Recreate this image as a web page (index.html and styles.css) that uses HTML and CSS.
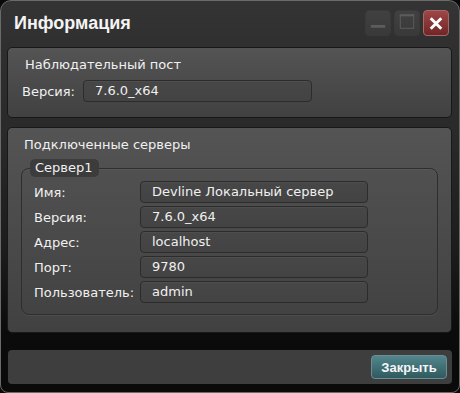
FILE: index.html
```html
<!DOCTYPE html>
<html lang="ru">
<head>
<meta charset="utf-8">
<title>Информация</title>
<link rel="stylesheet" href="styles.css">
</head>
<body>
<div class="window">
  <header class="titlebar">
    <h1 class="title">Информация</h1>
    <div class="controls">
      <button class="ctl ctl-min" aria-label="Свернуть">
        <svg width="25" height="25" viewBox="0 0 25 25"><rect x="5" y="14" width="15" height="3" fill="#5c5c5c"/></svg>
      </button>
      <button class="ctl ctl-max" aria-label="Развернуть">
        <svg width="25" height="25" viewBox="0 0 25 25"><rect x="5.5" y="3.5" width="14" height="14" fill="none" stroke="#5c5c5c" stroke-width="1"/><rect x="5" y="3" width="15" height="2" fill="#5c5c5c"/></svg>
      </button>
      <button class="ctl ctl-close" aria-label="Закрыть">
        <svg width="25" height="25" viewBox="0 0 25 25"><path d="M7 7 L18 18 M18 7 L7 18" stroke="#fff" stroke-width="3" stroke-linecap="butt"/></svg>
      </button>
    </div>
  </header>

  <div class="content">
    <section class="panel panel-post">
      <div class="panel-title">Наблюдательный пост</div>
      <div class="row row-post">
        <span class="label">Версия:</span>
        <div class="field field-post">7.6.0_x64</div>
      </div>
    </section>

    <section class="panel panel-servers">
      <div class="panel-title">Подключенные серверы</div>
      <fieldset class="group">
        <legend class="legend">Сервер1</legend>
        <div class="rows">
          <div class="row"><span class="label label-srv">Имя:</span><div class="field">Devline Локальный сервер</div></div>
          <div class="row"><span class="label label-srv">Версия:</span><div class="field">7.6.0_x64</div></div>
          <div class="row"><span class="label label-srv">Адрес:</span><div class="field">localhost</div></div>
          <div class="row"><span class="label label-srv">Порт:</span><div class="field">9780</div></div>
          <div class="row"><span class="label label-srv">Пользователь:</span><div class="field">admin</div></div>
        </div>
      </fieldset>
    </section>
  </div>

  <footer class="footer">
    <button class="btn-close">Закрыть</button>
  </footer>
</div>
</body>
</html>
```

FILE: styles.css
```css
html, body {
  margin: 0;
  padding: 0;
  background: #0a0a0a;
}

.window {
  box-sizing: border-box;
  width: 460px;
  height: 393px;
  border: 1px solid #6a6a6a;
  border-radius: 11px 11px 8px 8px;
  background: linear-gradient(to bottom, #343434 0px, #2e2e2e 60px, #2a2a2a 130px, #1c1c1c 250px, #0b0b0b 332px, #0a0a0a 393px);
  display: flex;
  flex-direction: column;
  font-family: "DejaVu Sans", Verdana, sans-serif;
  font-size: 13px;
  color: #f0f0f0;
  overflow: hidden;
}

.titlebar {
  height: 46px;
  display: flex;
  align-items: flex-start;
  justify-content: space-between;
  padding: 0 10px 0 13px;
}

.title {
  margin: 11px 0 0;
  font-family: "Liberation Sans", Arial, sans-serif;
  font-weight: bold;
  font-size: 18px;
  line-height: 22px;
  color: #f4f4f4;
}

.controls {
  display: flex;
  gap: 3px;
  margin-top: 9px;
}

.ctl {
  width: 26px;
  height: 26px;
  padding: 0;
  border: 1px solid #3a3a3a;
  border-radius: 4px;
  background: linear-gradient(to bottom, #414141, #393939);
  display: flex;
  align-items: center;
  justify-content: center;
}

.ctl svg { display: block; }

.ctl-close {
  border-color: #a86868;
  background: linear-gradient(to bottom, #9e4646, #702626);
}

.content {
  display: flex;
  flex-direction: column;
  gap: 9px;
  padding: 0 7px 0 6px;
}

.panel {
  border: 1px solid #181818;
  border-radius: 5px;
  background: linear-gradient(to bottom, #545454, #414141);
}

.panel-title {
  line-height: 18px;
  padding-left: 3px;
}

.panel-post {
  padding: 8px 14px 15px;
}

.panel-post .panel-title { margin-bottom: 6px; }

.row {
  display: flex;
  align-items: center;
  height: 22px;
}

.label {
  width: 61px;
  flex: none;
}

.field {
  box-sizing: border-box;
  height: 22px;
  border: 1px solid #2c2c2c;
  border-radius: 4px;
  background: linear-gradient(to bottom, #474747, #434343);
  box-shadow: inset 0 1px 0 rgba(255,255,255,0.04);
  padding: 0 11px;
  line-height: 20px;
  white-space: nowrap;
  overflow: hidden;
}

.field-post { width: 229px; }

.panel-servers {
  padding: 8px 13px 17px;
  flex: none;
  height: 206px;
  box-sizing: border-box;
}

.group {
  margin: 5px 0 0;
  padding: 0 0 11px;
  border: 1px solid #2e2e2e;
  border-radius: 8px;
  box-shadow: 0 1px 0 rgba(255,255,255,0.06), inset 0 1px 0 rgba(255,255,255,0.05);
  min-width: 0;
}

.legend {
  margin-left: 8px;
  padding: 0 6px 0 5px;
  height: 18px;
  line-height: 18px;
  border-radius: 5px;
  background: #3c3c3c;
}

.rows {
  display: flex;
  flex-direction: column;
  gap: 3px;
  padding: 4px 0 0 12px;
}

.label-srv { width: 106px; }

.rows .field { width: 228px; }

.footer {
  margin: auto 7px 8px 7px;
  height: 34px;
  box-sizing: border-box;
  border-radius: 4px;
  background: #3e3e3e;
  display: flex;
  justify-content: flex-end;
  align-items: flex-start;
  padding: 5px 5px 0 0;
}

.btn-close {
  width: 76px;
  height: 24px;
  border: 1px solid #6a8e92;
  border-radius: 4px;
  background: linear-gradient(to bottom, #52868c, #2f5a5f);
  color: #f6f6f6;
  font-family: "Liberation Sans", Tahoma, Arial, sans-serif;
  font-weight: bold;
  font-size: 13px;
  padding: 0;
}
```
